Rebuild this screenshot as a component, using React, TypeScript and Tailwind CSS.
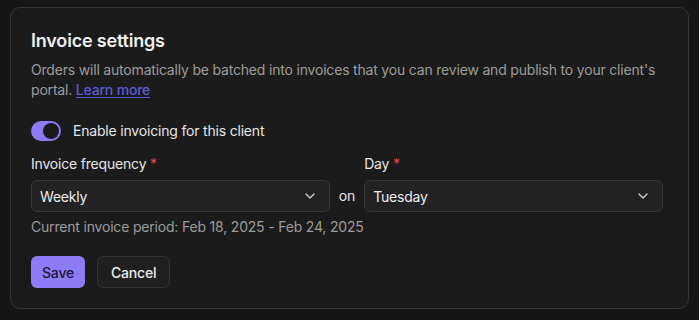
import { ChevronDown } from 'lucide-react';

function SelectBox({ value }: { value: string }) {
  return (
    <div className="flex h-8 items-center justify-between rounded-md border border-[#36363a] bg-[#222225] pl-[8px] pr-[11px] text-[14px] text-[#ececec]">
      <span>{value}</span>
      <ChevronDown className="h-4 w-4 text-[#d0d0d0]" strokeWidth={2} />
    </div>
  );
}

export default function App() {
  return (
    <div className="min-h-[320px] bg-[#161616] px-[10px] pt-[7px] font-['Inter',sans-serif] tracking-[-0.19px]">
      <div className="rounded-[10px] border border-[#353535] bg-[#1b1b1b] px-5 pt-[20px] pb-[20px]">
        <h2 className="text-[18px] leading-[26px] font-semibold text-[#f0f0f0]">Invoice settings</h2>
        <p className="mt-[6px] text-[14px] leading-[20px] text-[#9c9c9c]">
          Orders will automatically be batched into invoices that you can review and publish to your client's portal.{' '}
          <a href="#" className="font-medium text-[#5b5bd6] underline underline-offset-2">Learn more</a>
        </p>

        <div className="mt-[20px] flex items-center gap-3">
          <div className="flex h-5 w-[30px] items-center justify-end rounded-full bg-[#8b7cf6] pr-[2px]">
            <div className="h-4 w-4 rounded-full bg-[#1b1b1b]" />
          </div>
          <span className="text-[14px] text-[#e6e6e6]">Enable invoicing for this client</span>
        </div>

        <div className="mt-[13px] flex w-[632px] items-end gap-[9px]">
          <div className="flex-1">
            <label className="mb-[6px] block text-[14px] leading-[20px] text-[#e6e6e6]">
              Invoice frequency <span className="text-[#e5484d]">*</span>
            </label>
            <SelectBox value="Weekly" />
          </div>
          <span className="pb-[6px] text-[14px] text-[#e6e6e6]">on</span>
          <div className="flex-1">
            <label className="mb-[6px] block text-[14px] leading-[20px] text-[#e6e6e6]">
              Day <span className="text-[#e5484d]">*</span>
            </label>
            <SelectBox value="Tuesday" />
          </div>
        </div>

        <p className="mt-[5px] text-[14px] leading-[20px] text-[#9c9c9c]">
          Current invoice period: Feb 18, 2025 - Feb 24, 2025
        </p>

        <div className="mt-[19px] flex gap-3">
          <button className="h-8 rounded-md bg-[#8b7cf6] px-[11px] text-[14px] font-medium text-[#1e1533]">Save</button>
          <button className="h-8 rounded-md border border-[#333333] bg-[#202020] px-[13px] text-[14px] font-medium text-[#ececec]">Cancel</button>
        </div>
      </div>
    </div>
  );
}
